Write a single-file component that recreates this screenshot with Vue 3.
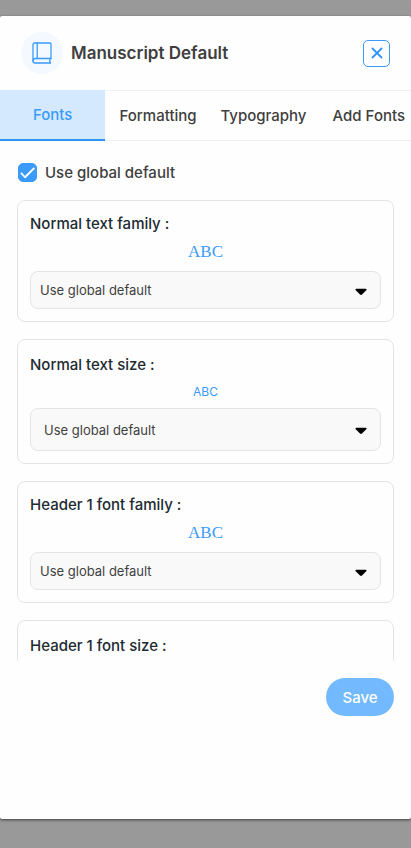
<script setup>
import { ref, reactive } from 'vue'

const tabs = ['Fonts', 'Formatting', 'Typography', 'Add Fonts']
const activeTab = ref('Fonts')
const useGlobal = ref(true)
const fields = reactive([
  { id: 'normal-family', label: 'Normal text family :', kind: 'family', value: 'Use global default' },
  { id: 'normal-size', label: 'Normal text size :', kind: 'size', value: 'Use global default' },
  { id: 'h1-family', label: 'Header 1 font family :', kind: 'family', value: 'Use global default' },
  { id: 'h1-size', label: 'Header 1 font size :', kind: 'size', value: 'Use global default' },
])
</script>

<template>
  <div class="backdrop">
    <section class="dialog" role="dialog" aria-labelledby="dialog-title">
      <header class="head">
        <span class="badge">
          <svg width="20" height="22" viewBox="0 0 20 22" fill="none" stroke="currentColor" stroke-width="1.3" stroke-linejoin="round" stroke-linecap="round">
            <path d="M19 16.5V2.2Q19 1 17.8 1H3Q1 1 1 3v16" />
            <path d="M5.2 1v15.5" />
            <path d="M19 16.5H3.2a2.2 2.2 0 0 0 0 4.5H18.4" />
            <path d="M18 16.5q-.8 2.2.4 4.5" />
          </svg>
        </span>
        <h1 id="dialog-title" class="title">Manuscript Default</h1>
        <button class="close" type="button" aria-label="Close">
          <svg width="12" height="12" viewBox="0 0 12 12" fill="none" stroke="currentColor" stroke-width="1.8" stroke-linecap="round">
            <path d="M1.5 1.5l9 9M10.5 1.5l-9 9" />
          </svg>
        </button>
      </header>

      <nav class="tabs" role="tablist">
        <button
          v-for="tab in tabs"
          :key="tab"
          type="button"
          role="tab"
          class="tab"
          :class="{ active: tab === activeTab }"
          :aria-selected="tab === activeTab"
          @click="activeTab = tab"
        >{{ tab }}</button>
      </nav>

      <div class="content">
        <label class="global">
          <input v-model="useGlobal" class="check" type="checkbox" />
          <svg class="tick" width="19" height="19" viewBox="0 0 20 20" fill="none" stroke="currentColor" stroke-width="1.9" stroke-linecap="round" stroke-linejoin="round">
            <path d="M3.6 11l3.8 4L16.6 5.8" />
          </svg>
          <span>Use global default</span>
        </label>

        <div v-for="field in fields" :key="field.id" class="card" :class="field.kind">
          <label class="label" :for="field.id">{{ field.label }}</label>
          <div class="sample">ABC</div>
          <div class="picker">
            <select :id="field.id" v-model="field.value" class="select">
              <option>Use global default</option>
            </select>
            <svg class="caret" width="12" height="8" viewBox="0 0 12 8">
              <path d="M1.3.7h9.4q1.3.2.8 1.3L7 6.6q-1 .8-2 0L.5 2Q0 .9 1.3.7z" />
            </svg>
          </div>
        </div>
      </div>

      <footer class="foot">
        <button class="save" type="button">Save</button>
      </footer>
    </section>
  </div>
</template>

<style>
body {
  background: #999;
}
</style>

<style scoped>
.backdrop,
.backdrop * {
  box-sizing: border-box;
}
.backdrop {
  display: flex;
  flex-direction: column;
  height: 100vh;
  padding: 16px 0 29px;
  background: #999;
  font-family: Inter, "Liberation Sans", sans-serif;
  color: #3f3f3f;
}
button,
select {
  font-family: inherit;
  cursor: pointer;
}
.dialog {
  flex: 1;
  min-height: 0;
  display: flex;
  flex-direction: column;
  overflow: hidden;
  border-radius: 2px;
  background: #fefefe;
  box-shadow: 0 1px 3px rgba(0, 0, 0, 0.6);
}
.head {
  display: flex;
  align-items: center;
  gap: 8px;
  height: 74px;
  padding: 0 21px;
}
.badge {
  display: grid;
  place-items: center;
  width: 42px;
  height: 42px;
  border-radius: 50%;
  background: #f3f9fe;
  color: #3a9bfb;
}
.title {
  flex: 1;
  margin: 0;
  font-size: 17px;
  font-weight: 600;
  line-height: 24px;
}
.close {
  display: grid;
  place-items: center;
  width: 27px;
  height: 27px;
  padding: 0;
  border: 1px solid #3a9bfb;
  border-radius: 5px;
  background: transparent;
  color: #2f95fb;
}
.tabs {
  display: flex;
  flex-shrink: 0;
  overflow: hidden;
}
.tab {
  flex: 0 0 calc(100% / 3.9);
  height: 51px;
  padding: 0;
  border: 0 solid #f0f0f0;
  border-width: 1px 0;
  background: transparent;
  color: #3f3f3f;
  font-size: 15px;
  font-weight: 500;
  white-space: nowrap;
}
.tab.active {
  border-width: 0 0 2px;
  border-color: #2f95fb;
  background: #d4e9fe;
  color: #3a9bfb;
}
.content {
  flex: 1;
  min-height: 0;
  display: flex;
  flex-direction: column;
  gap: 17px;
  padding: 21px 17px 0;
  overflow-y: auto;
  scrollbar-width: none;
}
.global {
  display: grid;
  grid-template-columns: 19px 1fr;
  align-items: center;
  column-gap: 8px;
  flex-shrink: 0;
  height: 21px;
  padding-left: 1px;
  font-size: 15px;
  font-weight: 500;
}
.check {
  grid-area: 1 / 1;
  appearance: none;
  width: 19px;
  height: 19px;
  margin: 0;
  border: 1px solid #3a9bfb;
  border-radius: 5px;
}
.check:checked {
  background: #3a9bfb;
}
.tick {
  grid-area: 1 / 1;
  color: #fff;
  pointer-events: none;
}
.card {
  flex-shrink: 0;
  padding: 12px;
  border: 1px solid #e4e4e4;
  border-radius: 8px;
}
.label {
  display: block;
  color: #212a31;
  font-size: 15px;
  font-weight: 500;
  line-height: 21px;
}
.sample {
  padding-bottom: 2px;
  color: #3a9bfb;
  font-family: "Liberation Serif", serif;
  font-size: 17px;
  line-height: 35px;
  text-align: center;
}
.size .label {
  line-height: 25px;
}
.size .sample {
  font-family: Inter, sans-serif;
  font-size: 12px;
  line-height: 29px;
}
.picker {
  display: grid;
  align-items: center;
}
.select {
  grid-area: 1 / 1;
  appearance: none;
  width: 100%;
  height: 38px;
  padding: 0 36px 0 9px;
  border: 1px solid #e4e4e4;
  border-radius: 8px;
  background: #f9f9f9;
  color: #3f3f3f;
  font-size: 13px;
  font-weight: 400;
}
.size .select {
  height: 43px;
  padding-left: 13px;
}
.caret {
  grid-area: 1 / 1;
  justify-self: end;
  margin: 3px 14px 0 0;
  fill: #000;
  pointer-events: none;
}
.foot {
  display: flex;
  justify-content: flex-end;
  flex-shrink: 0;
  padding: 17px 17px 103px;
}
.save {
  min-width: 68px;
  height: 38px;
  padding: 0 16px;
  border: 0;
  border-radius: 19px;
  background: #73b9fe;
  color: #fff;
  font-size: 15px;
  font-weight: 500;
}
</style>
